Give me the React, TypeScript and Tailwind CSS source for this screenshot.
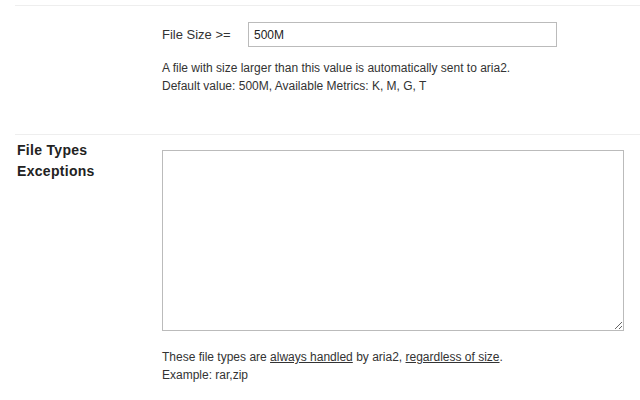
export default function App() {
  return (
    <div className="min-h-[400px] bg-white pl-[15px] pt-[5px] font-['Liberation_Sans',Arial,sans-serif] text-[#333]">
      {/* file size row */}
      <div className="flex h-[129px] border-t border-[#eee]">
        <div className="w-[147px] shrink-0" />
        <div className="pt-[16px]">
          <div className="flex items-center">
            <label className="w-[86px] text-[13px]">File Size &gt;=</label>
            <input
              className="h-[25px] w-[309px] border border-[#bbb] px-[5px] text-[12px] text-[#222] outline-none"
              defaultValue="500M"
            />
          </div>
          <p className="mt-[12px] text-[12px] leading-[18px]">
            A file with size larger than this value is automatically sent to aria2.
            <br />
            Default value: 500M, Available Metrics: K, M, G, T
          </p>
        </div>
      </div>

      {/* file types exceptions row */}
      <div className="flex border-t border-[#eee]">
        <div className="w-[147px] shrink-0 pl-[2px] pt-[5px] text-[14px] font-bold leading-[21px] tracking-[0.3px] text-[#222]">
          File Types
          <br />
          Exceptions
        </div>
        <div className="pt-[15px]">
          <textarea className="block h-[181px] w-[462px] border border-[#bbb] text-[12px] outline-none" />
          <p className="mt-[17px] text-[12px] leading-[18px]">
            These file types are <span className="underline">always handled</span> by aria2,{' '}
            <span className="underline">regardless of size</span>.
            <br />
            Example: rar,zip
          </p>
        </div>
      </div>
    </div>
  );
}
